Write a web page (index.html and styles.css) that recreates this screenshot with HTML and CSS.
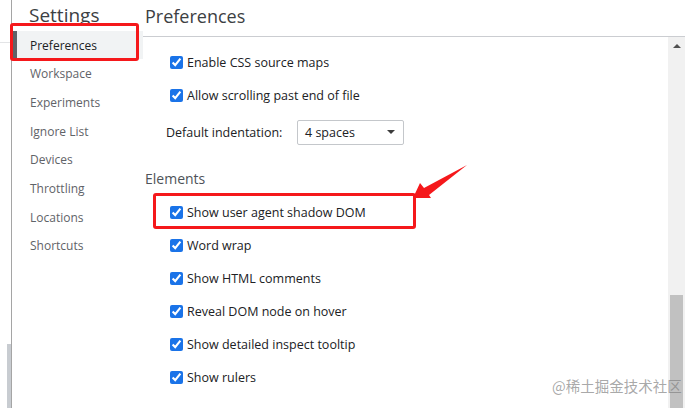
FILE: index.html
```html
<!DOCTYPE html>
<html lang="en">
<head>
<meta charset="utf-8">
<title>Settings - Preferences</title>
<link rel="stylesheet" href="styles.css">
</head>
<body>
<div class="app">
  <div class="edge">
    <div class="edge-top"></div>
    <div class="edge-thumb"></div>
  </div>
  <nav class="sidebar">
    <div class="side-title">Settings</div>
    <ul class="side-list">
      <li class="side-item selected">Preferences</li>
      <li class="side-item">Workspace</li>
      <li class="side-item">Experiments</li>
      <li class="side-item">Ignore List</li>
      <li class="side-item">Devices</li>
      <li class="side-item">Throttling</li>
      <li class="side-item">Locations</li>
      <li class="side-item">Shortcuts</li>
    </ul>
  </nav>
  <main class="main">
    <header class="main-head">Preferences</header>
    <div class="main-body">
      <div class="content">
        <label class="row"><input type="checkbox" checked><span>Enable CSS source maps</span></label>
        <label class="row"><input type="checkbox" checked><span>Allow scrolling past end of file</span></label>
        <div class="row select-row">
          <span class="select-label">Default indentation:</span>
          <div class="select"><span>4 spaces</span><span class="caret"></span></div>
        </div>
        <h2 class="section">Elements</h2>
        <label class="row"><input type="checkbox" checked><span>Show user agent shadow DOM</span></label>
        <label class="row"><input type="checkbox" checked><span>Word wrap</span></label>
        <label class="row"><input type="checkbox" checked><span>Show HTML comments</span></label>
        <label class="row"><input type="checkbox" checked><span>Reveal DOM node on hover</span></label>
        <label class="row"><input type="checkbox" checked><span>Show detailed inspect tooltip</span></label>
        <label class="row"><input type="checkbox" checked><span>Show rulers</span></label>
      </div>
      <div class="scrollbar">
        <span class="scroll-up"></span>
        <div class="scroll-thumb"></div>
      </div>
    </div>
  </main>
</div>

<div class="mark mark-pref"></div>
<div class="mark mark-shadow"></div>
<svg class="arrow" width="696" height="408" viewBox="0 0 696 408" aria-hidden="true">
  <polygon points="413,198 420,183 424,188 467,165 429,195 431,198" fill="#f5181b"/>
</svg>
<div class="watermark">@稀土掘金技术社区</div>
</body>
</html>
```
FILE: styles.css
```css
* { box-sizing: border-box; }
html, body {
  margin: 0;
  padding: 0;
  background: #fff;
  width: 696px;
  height: 408px;
  overflow: hidden;
  font-family: "Open Sans", "Noto Sans", sans-serif;
  color: #202124;
}

.app {
  display: flex;
  height: 408px;
}

/* left strip */
.edge {
  width: 12px;
  border-right: 1px solid #a5a5a5;
  display: flex;
  flex-direction: column;
  align-items: flex-end;
}
.edge-top {
  width: 100%;
  height: 43px;
  border-bottom: 1px solid #e3e4e6;
}
.edge-thumb {
  margin-top: auto;
  width: 4px;
  height: 64px;
  background: #c8ccd1;
}

/* sidebar */
.sidebar {
  width: 131px;
  padding-left: 1px;
  flex: none;
}
.side-title {
  height: 30.5px;
  padding-left: 16px;
  font-size: 19px;
  line-height: 30px;
  color: #3c4043;
}
.side-list {
  list-style: none;
  margin: 0;
  padding: 0;
}
.side-item {
  height: 28.7px;
  line-height: 26.7px;
  padding-top: 2px;
  padding-left: 13px;
  font-size: 12px;
  color: #5f6368;
  border-left: 4px solid transparent;
}
.side-item.selected {
  background: #f1f3f4;
  border-left-color: #5f6368;
  color: #202124;
}

/* main */
.main {
  width: 542px;
  flex: none;
  display: flex;
  flex-direction: column;
}
.main-head {
  height: 37px;
  border-bottom: 1px solid #cbcdd1;
  padding-left: 2px;
  font-size: 18px;
  line-height: 33px;
  color: #3c4043;
}
.main-body {
  flex: 1;
  display: flex;
  min-height: 0;
}
.content {
  flex: 1;
  padding-top: 9px;
}
.row {
  display: flex;
  align-items: center;
  height: 33px;
  padding-left: 27px;
  font-size: 12.5px;
  color: #202124;
}
.row input {
  margin: 0 4px 0 0;
  width: 13px;
  height: 13px;
  accent-color: #1a73e8;
}
.select-row {
  height: 40px;
  padding-left: 23px;
}
.select-label {
  width: 131px;
}
.select {
  width: 107px;
  height: 25px;
  border: 1px solid #c4c7cb;
  border-radius: 2px;
  display: flex;
  align-items: center;
  justify-content: space-between;
  padding: 0 8px 0 7px;
  font-size: 12.5px;
}
.caret {
  width: 0;
  height: 0;
  border-left: 4px solid transparent;
  border-right: 4px solid transparent;
  border-top: 4px solid #3c3c3c;
}
.section {
  margin: 17px 0 7px;
  padding-left: 2px;
  font-size: 14px;
  font-weight: normal;
  line-height: 20px;
  color: #4e5358;
}

/* scrollbar */
.scrollbar {
  width: 17px;
  background: #f1f1f1;
  display: flex;
  flex-direction: column;
  align-items: center;
  padding-top: 7px;
}
.scroll-up {
  width: 0;
  height: 0;
  border-left: 4px solid transparent;
  border-right: 4px solid transparent;
  border-bottom: 4px solid #505050;
}
.scroll-thumb {
  margin-top: auto;
  width: 13px;
  height: 113px;
  background: #c1c1c1;
}

/* annotations */
.mark {
  position: absolute;
  border: 3px solid #f5181b;
  border-radius: 3px;
}
.mark-pref {
  left: 10px;
  top: 23px;
  width: 129px;
  height: 38px;
}
.mark-shadow {
  left: 153px;
  top: 193px;
  width: 263px;
  height: 36px;
}
.arrow {
  position: absolute;
  left: 0;
  top: 0;
  pointer-events: none;
}
.watermark {
  position: absolute;
  left: 552px;
  top: 376px;
  font-family: "Noto Sans CJK SC", sans-serif;
  font-size: 14.5px;
  line-height: 20px;
  color: rgba(130, 130, 130, 0.7);
}
```
